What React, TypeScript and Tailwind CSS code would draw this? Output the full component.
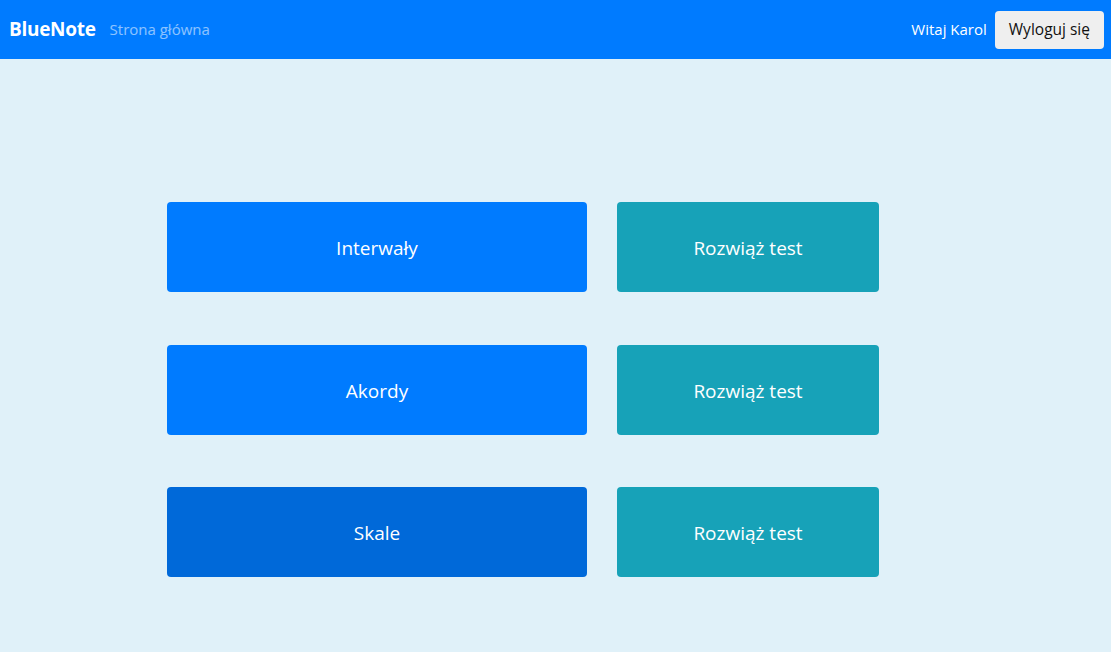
import React from 'react';

const topics = ['Interwały', 'Akordy', 'Skale'];

export default function App() {
  return (
    <div
      className="min-h-[652px] bg-[#e0f1f9]"
      style={{ fontFamily: '"Open Sans", "Noto Sans", sans-serif' }}
    >
      {/* Navbar */}
      <nav className="h-[59px] bg-[#007bff] flex items-center justify-between pl-[9px] pr-[7px]">
        <div className="flex items-center">
          <span className="text-white text-[19px] font-bold tracking-[-0.3px]">BlueNote</span>
          <span className="ml-[14px] text-[15px] text-white/55">Strona główna</span>
        </div>
        <div className="flex items-center">
          <span className="text-white text-[15px] mr-[8px]">Witaj Karol</span>
          <button className="h-[38px] px-[14px] rounded-[4px] bg-[#efefef] text-[#111] text-[15.5px]">
            Wyloguj się
          </button>
        </div>
      </nav>

      {/* Topics */}
      <div className="pl-[167px] pt-[143px] flex flex-col gap-[52.5px]">
        {topics.map((t, i) => (
          <div key={t} className="flex gap-[30px]">
            <button
              className={
                'w-[420px] h-[90px] pt-[3px] rounded-[4px] text-white text-[19px] ' +
                (i === 2 ? 'bg-[#0069d9]' : 'bg-[#007bff]')
              }
            >
              {t}
            </button>
            <button className="w-[262px] h-[90px] pt-[3px] rounded-[4px] bg-[#17a2b8] text-white text-[19px]">
              Rozwiąż test
            </button>
          </div>
        ))}
      </div>
    </div>
  );
}
